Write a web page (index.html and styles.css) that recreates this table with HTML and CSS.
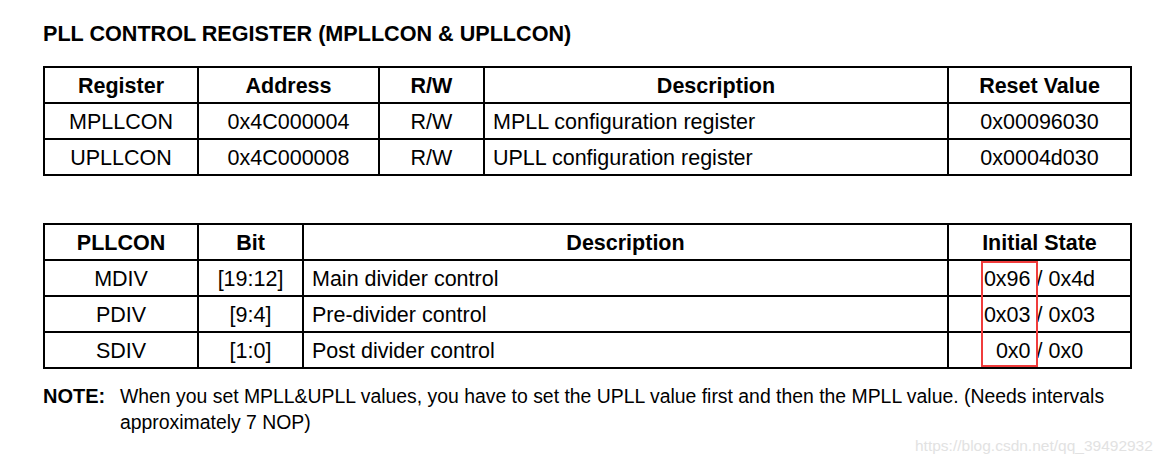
FILE: index.html
```html
<!DOCTYPE html>
<html>
<head>
<meta charset="utf-8">
<link rel="stylesheet" href="styles.css">
</head>
<body>
<div class="page">
  <h1 class="title">PLL CONTROL REGISTER (MPLLCON &amp; UPLLCON)</h1>

  <table class="reg reg-a">
    <colgroup>
      <col class="w154"><col class="w181"><col class="w105"><col class="w464"><col class="w183">
    </colgroup>
    <thead>
      <tr><th>Register</th><th>Address</th><th>R/W</th><th>Description</th><th>Reset Value</th></tr>
    </thead>
    <tbody>
      <tr><td>MPLLCON</td><td>0x4C000004</td><td>R/W</td><td class="left">MPLL configuration register</td><td>0x00096030</td></tr>
      <tr><td>UPLLCON</td><td>0x4C000008</td><td>R/W</td><td class="left">UPLL configuration register</td><td>0x0004d030</td></tr>
    </tbody>
  </table>

  <div class="table-wrap">
    <table class="reg reg-b">
      <colgroup>
        <col class="w154"><col class="w105"><col class="w645"><col class="w183">
      </colgroup>
      <thead>
        <tr><th>PLLCON</th><th>Bit</th><th>Description</th><th>Initial State</th></tr>
      </thead>
      <tbody>
        <tr><td>MDIV</td><td>[19:12]</td><td class="left">Main divider control</td><td>0x96 / 0x4d</td></tr>
        <tr><td>PDIV</td><td>[9:4]</td><td class="left">Pre-divider control</td><td>0x03 / 0x03</td></tr>
        <tr><td>SDIV</td><td>[1:0]</td><td class="left">Post divider control</td><td>0x0 / 0x0</td></tr>
      </tbody>
    </table>
    <div class="highlight"></div>
  </div>

  <div class="note">
    <div class="note-label">NOTE:</div>
    <div class="note-text">When you set MPLL&amp;UPLL values, you have to set the UPLL value first and then the MPLL value. (Needs intervals approximately 7 NOP)</div>
  </div>
</div>
<div class="watermark">https://blog.csdn.net/qq_39492932</div>
</body>
</html>
```

FILE: styles.css
```css
html, body {
  margin: 0;
  padding: 0;
  background: #ffffff;
}

body {
  font-family: "Liberation Sans", Arial, sans-serif;
  color: #000000;
  width: 1168px;
  height: 464px;
  position: relative;
  overflow: hidden;
}

.page {
  padding: 22px 0 0 43px;
}

.title {
  margin: 0;
  font-size: 21.6px;
  font-weight: bold;
  line-height: 24px;
}

.reg {
  border-collapse: collapse;
  table-layout: fixed;
  width: 1089px;
  font-size: 21.5px;
}

.reg-a {
  margin-top: 20px;
}

.table-wrap {
  position: relative;
  margin-top: 47px;
  width: 1089px;
}

.reg th,
.reg td {
  border: 2px solid #000;
  padding: 2px 0 0 0;
  height: 32px;
  text-align: center;
  vertical-align: middle;
  line-height: 24px;
  white-space: nowrap;
}

.reg tr {
  height: 36px;
}

.reg th {
  font-weight: bold;
}

.reg td.left {
  text-align: left;
  padding-left: 8px;
}

.w154 { width: 154px; }
.w181 { width: 181px; }
.w105 { width: 105px; }
.w464 { width: 464px; }
.w183 { width: 183px; }
.w645 { width: 645px; }

.highlight {
  position: absolute;
  left: 938px;
  top: 38px;
  width: 53px;
  height: 102px;
  border: 2px solid #f03c3c;
}

.note {
  display: flex;
  margin-top: 14px;
  font-size: 19.4px;
  line-height: 26px;
}

.note-label {
  flex: 0 0 77px;
  font-size: 20px;
  font-weight: bold;
}

.note-text {
  width: 1012px;
}

.watermark {
  position: absolute;
  left: 915px;
  top: 436px;
  font-size: 15.5px;
  line-height: 20px;
  color: #e2e2e2;
  white-space: nowrap;
}
```
